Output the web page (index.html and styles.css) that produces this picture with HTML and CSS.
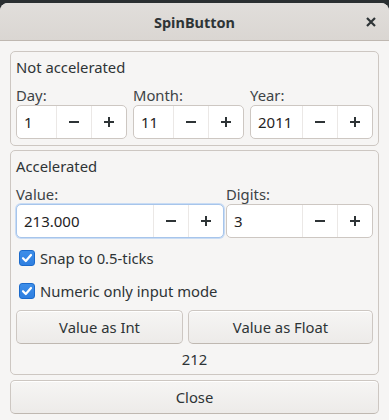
FILE: index.html
```html
<!DOCTYPE html>
<html>
<head>
<meta charset="utf-8">
<link rel="stylesheet" href="styles.css">
</head>
<body>
<div class="window">
  <div class="titlebar">
    <span class="title">SpinButton</span>
    <span class="close-x"><svg width="16" height="16" viewBox="0 0 16 16"><path d="M4 4L12 12M12 4L4 12" stroke="#2e3436" stroke-width="2.2" stroke-linecap="butt"/></svg></span>
  </div>
  <div class="content">
    <div class="frame frame1">
      <div class="frame-label">Not accelerated</div>
      <div class="row">
        <div class="field w-day">
          <div class="field-label">Day:</div>
          <div class="spin"><span class="spin-text">1</span><span class="spin-btn"><svg width="16" height="16" viewBox="0 0 16 16"><path d="M3 8H13" stroke="#2e3436" stroke-width="2"/></svg></span><span class="spin-btn"><svg width="16" height="16" viewBox="0 0 16 16"><path d="M3 8H13M8 3V13" stroke="#2e3436" stroke-width="2"/></svg></span></div>
        </div>
        <div class="field w-month">
          <div class="field-label">Month:</div>
          <div class="spin"><span class="spin-text">11</span><span class="spin-btn"><svg width="16" height="16" viewBox="0 0 16 16"><path d="M3 8H13" stroke="#2e3436" stroke-width="2"/></svg></span><span class="spin-btn"><svg width="16" height="16" viewBox="0 0 16 16"><path d="M3 8H13M8 3V13" stroke="#2e3436" stroke-width="2"/></svg></span></div>
        </div>
        <div class="field w-year">
          <div class="field-label">Year:</div>
          <div class="spin"><span class="spin-text">2011</span><span class="spin-btn"><svg width="16" height="16" viewBox="0 0 16 16"><path d="M3 8H13" stroke="#2e3436" stroke-width="2"/></svg></span><span class="spin-btn"><svg width="16" height="16" viewBox="0 0 16 16"><path d="M3 8H13M8 3V13" stroke="#2e3436" stroke-width="2"/></svg></span></div>
        </div>
      </div>
    </div>
    <div class="frame frame2">
      <div class="frame-label">Accelerated</div>
      <div class="row row2">
        <div class="field w-value">
          <div class="field-label">Value:</div>
          <div class="spin focused"><span class="spin-text">213.000</span><span class="spin-btn"><svg width="16" height="16" viewBox="0 0 16 16"><path d="M3 8H13" stroke="#2e3436" stroke-width="2"/></svg></span><span class="spin-btn"><svg width="16" height="16" viewBox="0 0 16 16"><path d="M3 8H13M8 3V13" stroke="#2e3436" stroke-width="2"/></svg></span></div>
        </div>
        <div class="field w-digits">
          <div class="field-label">Digits:</div>
          <div class="spin"><span class="spin-text">3</span><span class="spin-btn"><svg width="16" height="16" viewBox="0 0 16 16"><path d="M3 8H13" stroke="#2e3436" stroke-width="2"/></svg></span><span class="spin-btn"><svg width="16" height="16" viewBox="0 0 16 16"><path d="M3 8H13M8 3V13" stroke="#2e3436" stroke-width="2"/></svg></span></div>
        </div>
      </div>
      <div class="check-row first">
        <span class="checkbox"><svg width="16" height="16" viewBox="0 0 16 16"><path d="M4 8.2L6.8 11L12 5" fill="none" stroke="#ffffff" stroke-width="2.2" stroke-linecap="round" stroke-linejoin="round"/></svg></span>
        <span class="check-label">Snap to 0.5-ticks</span>
      </div>
      <div class="check-row">
        <span class="checkbox"><svg width="16" height="16" viewBox="0 0 16 16"><path d="M4 8.2L6.8 11L12 5" fill="none" stroke="#ffffff" stroke-width="2.2" stroke-linecap="round" stroke-linejoin="round"/></svg></span>
        <span class="check-label">Numeric only input mode</span>
      </div>
      <div class="btn-row">
        <div class="button b-int">Value as Int</div>
        <div class="button b-float">Value as Float</div>
      </div>
      <div class="result">212</div>
    </div>
    <div class="button close-btn">Close</div>
  </div>
</div>
</body>
</html>
```

FILE: styles.css
```css
html, body {
  margin: 0;
  padding: 0;
  background: #2a2f31;
}
body {
  font-family: "Noto Sans", "DejaVu Sans", sans-serif;
  font-size: 14.8px;
  color: #2e3436;
  width: 389px;
  height: 420px;
  overflow: hidden;
}
.window {
  margin-top: 3px;
  height: 417px;
  background: #f6f5f4;
  border-radius: 8px 8px 0 0;
  overflow: hidden;
}
.titlebar {
  height: 37px;
  border-bottom: 1px solid #bfb8b1;
  background: linear-gradient(to top, #dad6d2, #e1dedb);
  display: flex;
  align-items: center;
  justify-content: center;
  position: relative;
}
.title {
  font-weight: bold;
  font-size: 14.5px;
  margin-top: 1px;
}
.close-x {
  position: absolute;
  right: 10px;
  top: 11px;
  width: 16px;
  height: 16px;
}
.close-x svg { display: block; }
.content {
  padding: 10px 10px 0 10px;
  display: flex;
  flex-direction: column;
}
.frame {
  border: 1px solid #cdc7c2;
  border-radius: 5px;
  padding: 5px 5px 6px 5px;
}
.frame2 {
  margin-top: 4px;
  padding-bottom: 0;
}
.frame-label {
  height: 20px;
  line-height: 20px;
}
.row {
  display: flex;
  margin-top: 9px;
  column-gap: 6px;
}
.row2 { column-gap: 2px; }
.field { display: flex; flex-direction: column; }
.w-day, .w-month { width: 111px; }
.w-year { width: 123px; }
.w-value { width: 208px; }
.w-digits { width: 147px; }
.field-label {
  height: 19px;
  line-height: 19px;
  color: #3d4346;
}
.spin {
  height: 34px;
  box-sizing: border-box;
  border: 1px solid #cdc7c2;
  border-radius: 5px;
  background: #ffffff;
  display: flex;
  align-items: stretch;
}
.spin.focused {
  border-color: #a7c5eb;
  box-shadow: 0 0 0 1px #c9dcf4;
}
.spin-text {
  flex: 1;
  padding-left: 7px;
  line-height: 32px;
  font-size: 15px;
  color: #1f2324;
}
.spin-btn {
  width: 34px;
  border-left: 1px solid #ebe8e6;
  display: flex;
  align-items: center;
  justify-content: center;
}
.spin-btn svg { display: block; }
.check-row {
  height: 33px;
  display: flex;
  align-items: center;
  padding-left: 3px;
}
.check-row.first { margin-top: 3px; }
.checkbox {
  width: 16px;
  height: 16px;
  box-sizing: border-box;
  border-radius: 3px;
  background: linear-gradient(to bottom, #3d8ee9, #2f7fe0);
  border: 1px solid #1b6acb;
  display: flex;
  align-items: center;
  justify-content: center;
}
.checkbox svg { display: block; margin: -1px; }
.check-label {
  margin-left: 5px;
}
.btn-row {
  display: flex;
  column-gap: 5px;
  margin-top: 3px;
}
.button {
  height: 34px;
  box-sizing: border-box;
  border: 1px solid #cdc7c2;
  border-bottom-color: #bfb8b1;
  border-radius: 5px;
  background: linear-gradient(to top, #edebe9, #f6f5f4);
  display: flex;
  align-items: center;
  justify-content: center;
  box-shadow: inset 0 1px #ffffff;
}
.b-int { width: 167px; }
.b-float { flex: 1; }
.result {
  height: 30px;
  line-height: 30px;
  text-align: center;
}
.close-btn {
  margin-top: 5px;
}
```
